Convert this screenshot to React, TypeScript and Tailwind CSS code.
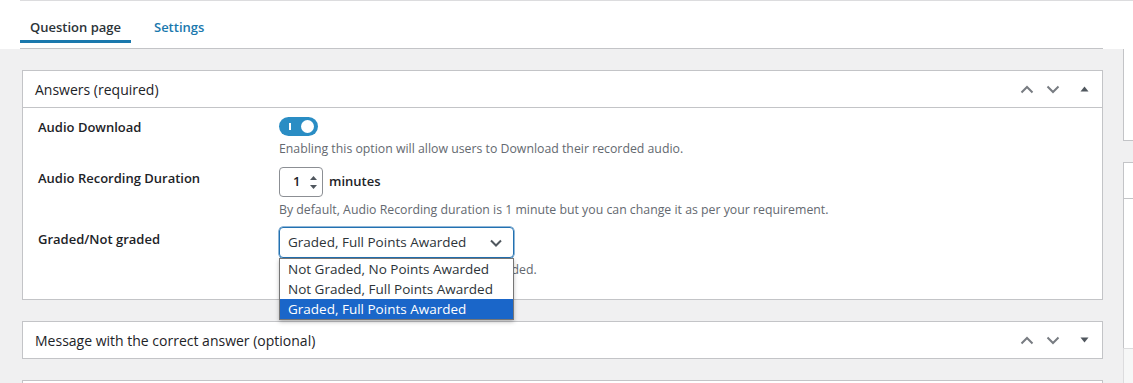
import React from "react";

const ChevronUp = () => (
  <svg width="14" height="9" viewBox="0 0 14 9" fill="none">
    <path d="M1.5 7.5L7 2l5.5 5.5" stroke="#787c82" strokeWidth="2" />
  </svg>
);

const ChevronDown = () => (
  <svg width="14" height="9" viewBox="0 0 14 9" fill="none">
    <path d="M1.5 1.5L7 7l5.5-5.5" stroke="#787c82" strokeWidth="2" />
  </svg>
);

const Caret = ({ up }: { up?: boolean }) => (
  <svg width="9" height="6" viewBox="0 0 9 6">
    {up ? <path d="M0.5 5.5L4.5 0.5l4 5z" fill="#50575e" /> : <path d="M0.5 0.5h8l-4 5z" fill="#50575e" />}
  </svg>
);

const PanelHeader = ({ title, open }: { title: string; open?: boolean }) => (
  <div className={`flex h-[36px] items-center pl-[12px] pr-[11px] ${open ? "border-b border-[#c3c4c7] h-[37px]" : ""}`}>
    <h2 className="flex-1 text-[14px] text-[#1d2327]">{title}</h2>
    <div className="flex items-center gap-[12px]">
      <ChevronUp />
      <ChevronDown />
      <span className="ml-[5px] flex w-[14px] justify-center">
        <Caret up={open} />
      </span>
    </div>
  </div>
);

const options = [
  "Not Graded, No Points Awarded",
  "Not Graded, Full Points Awarded",
  "Graded, Full Points Awarded",
];

export default function App() {
  return (
    <div className="min-h-[383px] w-[1133px] overflow-hidden bg-[#f0f0f1] font-['Open_Sans',sans-serif] text-[#1d2327]">
      {/* Tabs */}
      <div className="bg-white">
        <div className="ml-[20px] border-t border-[#dcdcde] pt-[16px]">
          <div className="flex w-[1083px] border-b border-[#c3c4c7]">
            <div className="flex flex-col">
              <span className="px-[10px] text-[13px] font-semibold leading-[20px] text-[#2c3338]">Question page</span>
              <span className="mt-[3px] h-[3px] bg-[#1a78ad]" />
              <span className="h-[5px]" />
            </div>
            <span className="ml-[13px] px-[10px] text-[13px] font-semibold leading-[20px] text-[#1a78ad]">Settings</span>
          </div>
        </div>
      </div>

      <div className="flex pt-[21px]">
        {/* Main column */}
        <div className="ml-[22px] w-[1081px]">
          <div className="relative border border-[#c3c4c7] bg-white">
            <PanelHeader title="Answers (required)" open />
            <div className="pb-[19px] pl-[15px] pt-[9px]">
              {/* Audio download */}
              <div className="flex">
                <label className="w-[241px] text-[13px] font-semibold leading-[20px]">Audio Download</label>
                <div>
                  <div className="relative h-[19px] w-[39px] rounded-full bg-[#2a8dc4]">
                    <span className="absolute left-[10px] top-[6px] h-[7px] w-[2px] bg-white" />
                    <span className="absolute right-[4px] top-[3px] h-[13px] w-[13px] rounded-full bg-white" />
                  </div>
                  <p className="mt-[3px] text-[12.3px] leading-[20px] text-[#646970]">
                    Enabling this option will allow users to Download their recorded audio.
                  </p>
                </div>
              </div>

              {/* Duration */}
              <div className="mt-[8px] flex">
                <label className="w-[241px] pt-[1px] text-[13px] font-semibold leading-[20px]">Audio Recording Duration</label>
                <div>
                  <div className="flex items-center">
                    <div className="flex h-[30px] w-[44px] items-center rounded-[4px] border border-[#8c8f94] pl-[13px]">
                      <span className="text-[13px] font-semibold text-[#1d2327]">1</span>
                      <div className="ml-[10px] flex flex-col gap-[5px]">
                        <svg width="7" height="4" viewBox="0 0 7 4"><path d="M0 4L3.5 0 7 4z" fill="#50575e" /></svg>
                        <svg width="7" height="4" viewBox="0 0 7 4"><path d="M0 0h7L3.5 4z" fill="#50575e" /></svg>
                      </div>
                    </div>
                    <span className="ml-[6px] text-[13px] font-semibold">minutes</span>
                  </div>
                  <p className="mt-[3px] text-[12.3px] leading-[20px] text-[#646970]">
                    By default, Audio Recording duration is 1 minute but you can change it as per your requirement.
                  </p>
                </div>
              </div>

              {/* Graded */}
              <div className="mt-[7px] flex">
                <label className="w-[241px] pt-[2px] text-[13px] font-semibold leading-[20px]">Graded/Not graded</label>
                <div className="relative">
                  <div className="flex h-[31px] w-[235px] items-center rounded-[4px] border border-[#2271b1] pl-[8px] pr-[11px] shadow-[0_0_0_0.5px_#2271b1]">
                    <span className="flex-1 text-[13.5px] text-[#2c3338]">Graded, Full Points Awarded</span>
                    <svg width="12" height="8" viewBox="0 0 12 8" fill="none">
                      <path d="M1 1.5l5 5 5-5" stroke="#50575e" strokeWidth="2" />
                    </svg>
                  </div>
                  <p className="mt-[2px] whitespace-nowrap text-[12.3px] leading-[20px] text-[#646970]">
                    Choose whether the answer must be graded.
                  </p>
                  {/* Open dropdown */}
                  <ul className="absolute left-0 top-[31px] z-10 w-[235px] border border-[#767676] bg-white shadow-[0_2px_4px_rgba(0,0,0,0.25)]">
                    {options.map((o, i) => (
                      <li
                        key={o}
                        className={`h-[20px] pl-[8px] text-[13.5px] leading-[20px] ${
                          i === 2 ? "bg-[#1a66c9] text-white" : "text-[#2c3338]"
                        }`}
                      >
                        {o}
                      </li>
                    ))}
                  </ul>
                </div>
              </div>
            </div>
          </div>

          <div className="mt-[21px] border border-[#c3c4c7] bg-white">
            <PanelHeader title="Message with the correct answer (optional)" />
          </div>

          <div className="mt-[21px] h-[40px] border border-[#c3c4c7] bg-white" />
        </div>

        {/* Sidebar */}
        <div className="ml-[20px] flex-1">
          <div className="-mt-[21px] h-[92px] border-b border-l border-[#c3c4c7] bg-white" />
          <div className="mt-[21px] h-[186px] border-l border-t border-[#c3c4c7] bg-white">
            <div className="h-[36px] border-b border-[#c3c4c7]" />
          </div>
          <div className="h-[40px] border-l border-t border-[#dcdcde] bg-[#f6f7f7]" />
        </div>
      </div>
    </div>
  );
}
